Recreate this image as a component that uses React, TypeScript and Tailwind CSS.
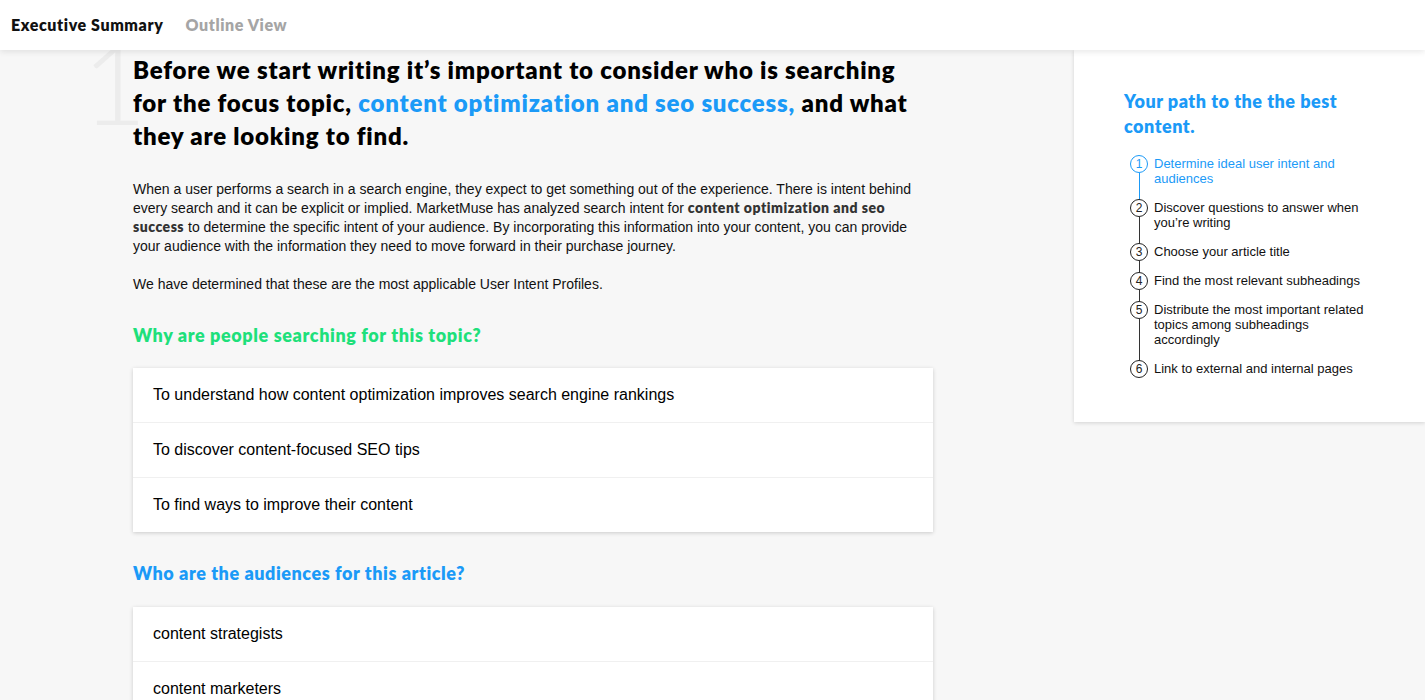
import React from "react";

const heading = { fontFamily: "Lato, 'Open Sans', sans-serif" };
const body = { fontFamily: "'Liberation Sans', Arial, sans-serif" };

const intents = [
  "To understand how content optimization improves search engine rankings",
  "To discover content-focused SEO tips",
  "To find ways to improve their content",
];

const audiences = ["content strategists", "content marketers", "SEO specialists"];

const steps = [
  "Determine ideal user intent and audiences",
  "Discover questions to answer when you\u2019re writing",
  "Choose your article title",
  "Find the most relevant subheadings",
  "Distribute the most important related topics among subheadings accordingly",
  "Link to external and internal pages",
];

function ListCard({ items }: { items: string[] }) {
  return (
    <div className="w-[800px] bg-white shadow-[0_1px_4px_rgba(0,0,0,0.18)]">
      {items.map((item, i) => (
        <div
          key={item}
          className={
            i > 0
              ? "flex h-[55px] items-center border-t border-[#f0f0f0] pl-5 text-[16px] text-black"
              : "flex h-[54px] items-center pl-5 text-[16px] text-black"
          }
          style={body}
        >
          {item}
        </div>
      ))}
    </div>
  );
}

function Steps() {
  return (
    <ol className="ml-[6px] mt-[17px] flex flex-col" style={body}>
      {steps.map((step, i) => {
        const active = i === 0;
        const last = i === steps.length - 1;
        return (
          <li key={step} className="flex gap-[6px]">
            <div className="relative flex w-[18px] flex-none flex-col items-center">
              <span
                className={
                  active
                    ? "z-10 mt-[-1px] flex h-[18px] w-[18px] items-center justify-center rounded-full border border-[#1b9af7] bg-white text-[12px] text-[#1b9af7]"
                    : "z-10 mt-[-1px] flex h-[18px] w-[18px] items-center justify-center rounded-full border border-[#222] bg-white text-[12px] text-[#222]"
                }
              >
                {i + 1}
              </span>
              {!last && (
                <span
                  className={
                    active
                      ? "w-px flex-1 bg-[#1b9af7]"
                      : "w-px flex-1 bg-[#333]"
                  }
                />
              )}
            </div>
            <p
              className={
                active
                  ? "w-[215px] pb-[14px] text-[13px] leading-[15px] text-[#1b9af7]"
                  : "w-[215px] pb-[14px] text-[13px] leading-[15px] text-[#111]"
              }
            >
              {step}
            </p>
          </li>
        );
      })}
    </ol>
  );
}

export default function App() {
  return (
    <div className="relative h-[700px] w-[1425px] overflow-hidden bg-[#f7f7f7]">
      <header
        className="relative z-20 flex h-[50px] items-center gap-[22px] bg-white pl-[11px] shadow-[0_2px_6px_rgba(0,0,0,0.09)]"
        style={heading}
      >
        <span className="text-[16px] font-extrabold tracking-[0.6px] text-[#111]">Executive Summary</span>
        <span className="text-[16px] font-extrabold tracking-[0.6px] text-[#a5a5a5]">Outline View</span>
      </header>

      <div className="flex">
        <main className="relative w-[1074px] pl-[133px] pt-[3px]">
          <span
            className="absolute left-[82px] top-[-24px] select-none text-[112px] font-light leading-none text-[#ececec]"
            style={heading}
          >
            1
          </span>
          <h1
            className="relative w-[782px] text-[24px] font-extrabold leading-[33px] tracking-[0.8px] text-black"
            style={heading}
          >
            Before we start writing it’s important to consider who is searching
            for the focus topic,{" "}
            <span className="text-[#1b9af7]">content optimization and seo success,</span>{" "}
            and what they are looking to find.
          </h1>

          <p className="mt-[28px] w-[790px] text-[14px] leading-[19px] text-[#111]" style={body}>
            When a user performs a search in a search engine, they expect to get
            something out of the experience. There is intent behind every search
            and it can be explicit or implied. MarketMuse has analyzed search
            intent for{" "}
            <b className="font-extrabold leading-[14px] tracking-[0.5px] text-[#333]" style={heading}>
              content optimization and seo success
            </b>{" "}
            to determine the specific intent of your audience. By incorporating
            this information into your content, you can provide your audience
            with the information they need to move forward in their purchase
            journey.
          </p>
          <p className="mt-[19px] text-[14px] leading-[19px] text-[#111]" style={body}>
            We have determined that these are the most applicable User Intent
            Profiles.
          </p>

          <h2
            className="mt-[29px] text-[18px] font-extrabold leading-[24px] tracking-[0.6px] text-[#1ee07b]"
            style={heading}
          >
            Why are people searching for this topic?
          </h2>
          <div className="mt-[21px]">
            <ListCard items={intents} />
          </div>

          <h2
            className="mt-[29px] text-[18px] font-extrabold leading-[24px] tracking-[0.55px] text-[#1b9af7]"
            style={heading}
          >
            Who are the audiences for this article?
          </h2>
          <div className="mt-[22px]">
            <ListCard items={audiences} />
          </div>
        </main>

        <aside className="h-[372px] w-[351px] bg-white pl-[50px] pt-[39px] shadow-[0_1px_4px_rgba(0,0,0,0.15)]">
          <h3
            className="w-[240px] text-[18px] font-extrabold leading-[25px] tracking-[0.5px] text-[#1b9af7]"
            style={heading}
          >
            Your path to the the best content.
          </h3>
          <Steps />
        </aside>
      </div>
    </div>
  );
}
